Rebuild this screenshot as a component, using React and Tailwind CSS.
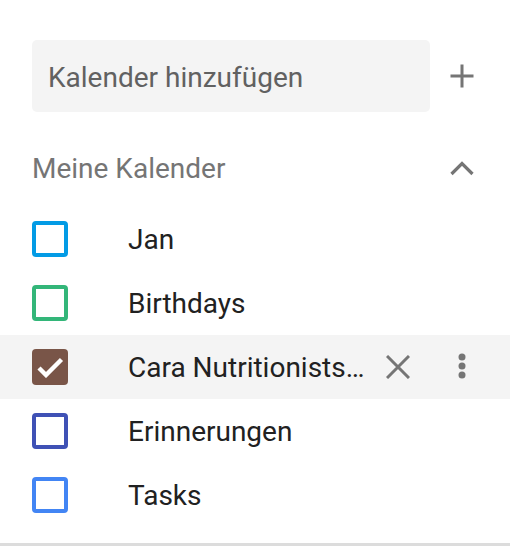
import { useState } from "react";

const calendars = [
  { id: "jan", name: "Jan", color: "border-[#039be5]", fill: "bg-[#039be5]", checked: false },
  { id: "birthdays", name: "Birthdays", color: "border-[#33b679]", fill: "bg-[#33b679]", checked: false },
  { id: "cara", name: "Cara Nutritionists…", color: "border-[#795548]", fill: "bg-[#795548]", checked: true, hover: true },
  { id: "reminders", name: "Erinnerungen", color: "border-[#3f51b5]", fill: "bg-[#3f51b5]", checked: false },
  { id: "tasks", name: "Tasks", color: "border-[#4285f4]", fill: "bg-[#4285f4]", checked: false },
];

function PlusIcon() {
  return (
    <svg width="24" height="24" viewBox="0 0 24 24" className="text-[#757575]">
      <path d="M12 0.5v23M0.5 12h23" stroke="currentColor" strokeWidth="3" fill="none" />
    </svg>
  );
}

function ChevronUp() {
  return (
    <svg width="24" height="16" viewBox="0 0 24 16" className="text-[#757575]">
      <path d="M1.5 14L12 3.5L22.5 14" stroke="currentColor" strokeWidth="3.2" fill="none" />
    </svg>
  );
}

function CloseIcon() {
  return (
    <svg width="24" height="24" viewBox="0 0 24 24" className="text-[#757575]">
      <path d="M1 1L23 23M23 1L1 23" stroke="currentColor" strokeWidth="3" fill="none" />
    </svg>
  );
}

function MoreIcon() {
  return (
    <svg width="8" height="28" viewBox="0 0 8 28" className="text-[#757575]">
      <circle cx="4" cy="4" r="3.5" fill="currentColor" />
      <circle cx="4" cy="13" r="3.5" fill="currentColor" />
      <circle cx="4" cy="22" r="3.5" fill="currentColor" />
    </svg>
  );
}

function Checkbox({ calendar }) {
  if (calendar.checked) {
    return (
      <div className={`flex h-9 w-9 shrink-0 items-center justify-center rounded-[4px] ${calendar.fill}`}>
        <svg width="28" height="22" viewBox="0 0 28 22">
          <path d="M3 12L10 19L25.5 3.5" stroke="white" strokeWidth="4.4" fill="none" />
        </svg>
      </div>
    );
  }
  return <div className={`h-9 w-9 shrink-0 rounded-[4px] border-4 ${calendar.color}`} />;
}

function CalendarRow({ calendar }) {
  return (
    <div className={`flex h-16 items-center pl-8 pr-6 ${calendar.hover ? "bg-[#f4f4f4]" : ""}`}>
      <Checkbox calendar={calendar} />
      <span className="ml-[60px] mr-2 min-w-0 flex-1 overflow-hidden whitespace-nowrap pt-[2px] text-[28px] text-[#212121]">
        {calendar.name}
      </span>
      {calendar.hover && (
        <>
          <button className="flex h-12 w-12 items-center justify-center">
            <CloseIcon />
          </button>
          <button className="ml-4 flex h-12 w-12 items-center justify-center">
            <MoreIcon />
          </button>
        </>
      )}
    </div>
  );
}

export default function App() {
  const [query, setQuery] = useState("");

  return (
    <div className="h-[546px] w-[510px] overflow-hidden bg-white font-['Roboto',sans-serif]">
      <div className="flex items-center pl-8 pr-6 pt-10">
        <input
          value={query}
          onChange={(event) => setQuery(event.target.value)}
          placeholder="Kalender hinzufügen"
          className="h-[72px] w-[398px] rounded-[5px] bg-[#f4f4f4] pl-4 pt-[2px] text-[28px] text-[#212121] outline-none placeholder:text-[#616161]"
        />
        <button className="ml-auto flex h-12 w-12 items-center justify-center">
          <PlusIcon />
        </button>
      </div>

      <div className="mt-[24px] flex h-16 items-center pl-8 pr-6">
        <h2 className="flex-1 pt-[2px] text-[28px] text-[#757575]">Meine Kalender</h2>
        <button className="flex h-12 w-12 items-center justify-center">
          <ChevronUp />
        </button>
      </div>

      <div className="mt-[7px]">
        {calendars.map((calendar) => (
          <CalendarRow key={calendar.id} calendar={calendar} />
        ))}
      </div>

      <div className="mt-4 h-[3px] bg-[#dcdcdc]" />
    </div>
  );
}
